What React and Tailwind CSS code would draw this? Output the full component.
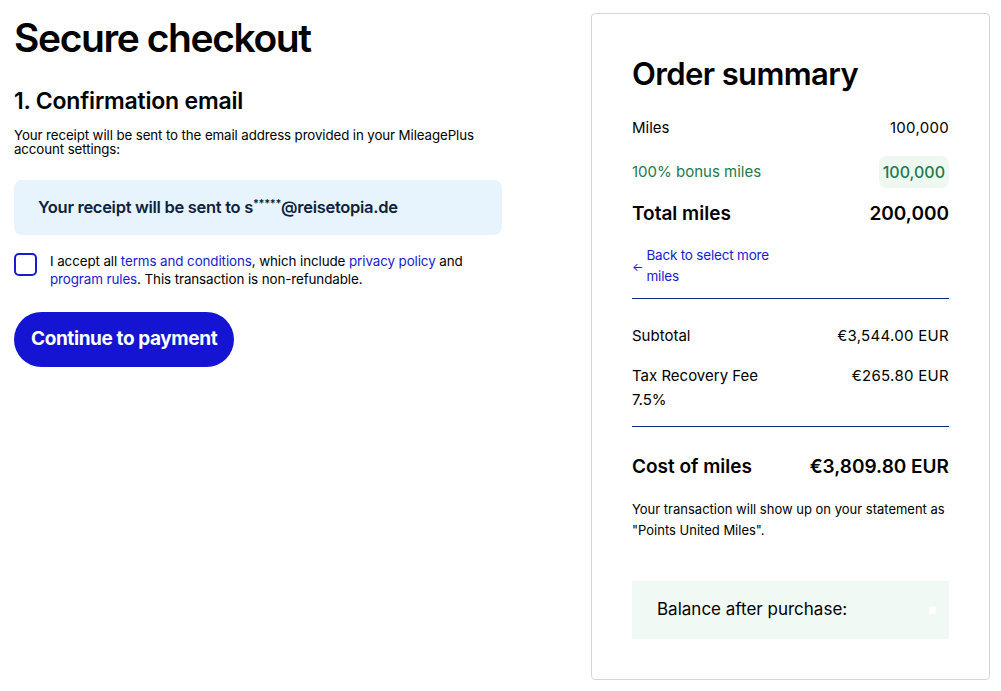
export default function App() {
  return (
    <div
      className="min-h-screen bg-white flex justify-between pl-[14px] pr-[11px] pt-[13px] text-black"
      style={{ fontFamily: "Inter, 'Noto Sans', sans-serif" }}
    >
      <div className="w-[488px]">
        <h1 className="text-[39px] leading-[48px] font-semibold tracking-[-1.4px] mt-[1px]">Secure checkout</h1>
        <h2 className="text-[23px] leading-[30px] font-semibold mt-[24px] tracking-[-0.2px]">1. Confirmation email</h2>
        <p className="text-[13.3px] leading-[14px] mt-[12px] tracking-[-0.1px]">
          Your receipt will be sent to the email address provided in your MileagePlus account settings:
        </p>
        <div className="mt-[24px] h-[55px] rounded-lg bg-[#e8f4fd] flex items-center px-[24px]">
          <span className="text-[16.5px] font-semibold text-[#0c2340] tracking-[-0.3px]">
            Your receipt will be sent to s<span className="text-[11px] align-top">*****</span>@reisetopia.de
          </span>
        </div>
        <div className="flex gap-[13px] mt-[17px]">
          <div className="w-[23px] h-[23px] shrink-0 rounded-[5px] border-2 border-[#1a1ad0] mt-[1px]"></div>
          <p className="text-[13.4px] leading-[18px] tracking-[-0.1px]">
            I accept all <a className="text-[#1a1ad0]">terms and conditions</a>, which include{" "}
            <a className="text-[#1a1ad0]">privacy policy</a> and <a className="text-[#1a1ad0]">program rules</a>. This
            transaction is non-refundable.
          </p>
        </div>
        <button className="mt-[24px] h-[55px] px-[17px] rounded-full bg-[#1414d2] text-white text-[19px] font-bold tracking-[-0.4px]">
          Continue to payment
        </button>
      </div>

      <div className="w-[399px] h-[667px] border border-[#d4d6dc] rounded-[4px] px-[40px] pt-[40px] pb-[40px]">
        <h2 className="text-[31px] leading-[40px] font-semibold tracking-[-0.6px]">Order summary</h2>

        <div className="flex justify-between items-center mt-[23px] text-[15px] h-[22px]">
          <span>Miles</span>
          <span className="tracking-[0.3px]">100,000</span>
        </div>
        <div className="flex justify-between items-center mt-[17px] text-[15px] text-[#1c7a4b]">
          <span>100% bonus miles</span>
          <span className="bg-[#eef8f1] rounded-lg px-[4px] h-[32px] flex items-center text-[16px] font-medium">100,000</span>
        </div>
        <div className="flex justify-between items-center mt-[13px] text-[19px] font-semibold h-[26px]">
          <span>Total miles</span>
          <span>200,000</span>
        </div>

        <div className="flex items-center mt-[18px] text-[13.5px] leading-[21px] text-[#1a1ad0]">
          <span className="text-[12px] mr-[3px]">←</span>
          <span className="w-[128px] tracking-[-0.2px]">Back to select more miles</span>
        </div>

        <div className="border-t border-[#0c2a80] mt-[11px]"></div>

        <div className="flex justify-between mt-[25px] text-[15px] leading-[24px]">
          <span>Subtotal</span>
          <span className="tracking-[0.3px]">€3,544.00 EUR</span>
        </div>
        <div className="flex justify-between mt-[16px] text-[15px] leading-[24px]">
          <span className="w-[140px]">Tax Recovery Fee 7.5%</span>
          <span className="tracking-[0.3px]">€265.80 EUR</span>
        </div>

        <div className="border-t border-[#0c2a80] mt-[14px]"></div>

        <div className="flex justify-between items-center mt-[27px] text-[19px] font-semibold h-[26px]">
          <span>Cost of miles</span>
          <span>€3,809.80 EUR</span>
        </div>
        <p className="text-[13px] leading-[21px] mt-[19px]">
          Your transaction will show up on your statement as "Points United Miles".
        </p>

        <div className="mt-[40px] h-[58px] bg-[#f0f9f3] flex items-center justify-between pl-[25px] pr-[13px]">
          <span className="text-[17px]">Balance after purchase:</span>
          <span className="w-[7px] h-[7px] bg-white"></span>
        </div>
      </div>
    </div>
  );
}
